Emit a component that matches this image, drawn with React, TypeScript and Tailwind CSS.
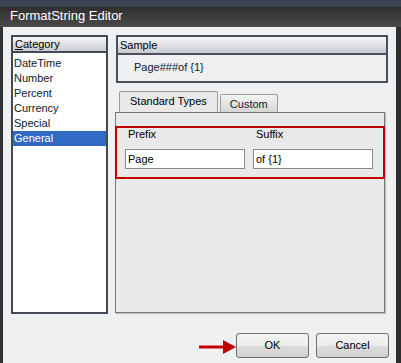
import React from "react";

const categories = ["DateTime", "Number", "Percent", "Currency", "Special", "General"];

const font = { fontFamily: '"Liberation Sans", Arial, sans-serif' };

const DialogButton = ({ label }: { label: string }) => (
    <button
        className="w-[73px] h-[25px] rounded-[3px] border border-[#707070] text-[11px] text-black bg-[linear-gradient(to_bottom,#f4f4f4_0%,#ebebeb_50%,#dddddd_51%,#cfcfcf_100%)]"
    >
        {label}
    </button>
);

const App: React.FC = () => {
    return (
        <div className="w-[401px] h-[363px] flex flex-col bg-[#333] overflow-hidden text-[11px] text-[#10182a]" style={font}>
            {/* title bar */}
            <div className="h-[27px] shrink-0 flex items-end pb-[5px] pl-[10px] bg-[linear-gradient(to_bottom,#3d4454_0px,#3d4454_7px,#2f2f2f_7px,#4a4a4a_100%)]">
                <span className="text-white text-[13px] leading-none">FormatString Editor</span>
            </div>

            <div className="flex flex-1">
                <div className="w-[3px] bg-[#333]"/>
                <div className="relative w-[393px] bg-[#eff0f2] flex flex-col pl-[8px] pt-[8px]">
                    <div className="flex gap-[8px]">
                        {/* category list */}
                        <div className="w-[97px] h-[279px] border-2 border-[#434955] bg-white flex flex-col">
                            <div className="h-[16px] border-b-2 border-[#434955] bg-[linear-gradient(to_bottom,#f6f7f8,#c8cbd0)] pl-[2px] leading-[15px] text-black">
                                <span className="underline">C</span>ategory
                            </div>
                            <div className="flex flex-col pt-[3px]">
                                {categories.map((c) => (
                                    <div
                                        key={c}
                                        className={
                                            c === "General"
                                                ? "h-[15px] leading-[15px] pl-[1px] bg-[#316ac5] text-white"
                                                : "h-[15px] leading-[15px] pl-[1px]"
                                        }
                                    >
                                        {c}
                                    </div>
                                ))}
                            </div>
                        </div>

                        {/* right column */}
                        <div className="w-[272px] flex flex-col">
                            <div className="h-[48px] border-2 border-[#4a505c] flex flex-col">
                                <div className="h-[18px] border-b-2 border-[#4a505c] bg-[linear-gradient(to_bottom,#f6f7f8,#c8cbd0)] pl-[2px] leading-[16px] text-black">
                                    Sample
                                </div>
                                <div className="pl-[16px] pt-[5px] leading-[14px]">Page###of {"{1}"}</div>
                            </div>

                            {/* tabs */}
                            <div className="flex items-end pl-[3px] pt-[8px] h-[29px]">
                                <div className="h-[21px] px-[10px] border border-b-0 border-[#9a9a9a] rounded-t-[2px] bg-[#e9e9e9] leading-[19px] text-black">
                                    Standard Types
                                </div>
                                <div className="h-[18px] ml-[2px] px-[9px] border border-b-0 border-[#9a9a9a] rounded-t-[2px] bg-[linear-gradient(to_bottom,#f4f4f4,#d6d6d6)] leading-[18px] text-[#222]">
                                    Custom
                                </div>
                            </div>
                            <div className="-ml-[1px] w-[270px] h-[201px] border border-[#787878] bg-[#e9e9e9] shadow-[1px_1px_1px_rgba(0,0,0,0.2)] pt-[13px]">
                                <div className="-ml-[1px] w-[270px] h-[53px] border-2 border-[#c00000] pl-[8px] flex gap-[8px]">
                                    <div className="flex flex-col">
                                        <div className="h-[13px] leading-[12px] pl-[3px] mb-[8px] text-black">Prefix</div>
                                        <div className="w-[120px] h-[20px] border border-[#8a8a8a] bg-white pl-[2px] leading-[18px] text-black">Page</div>
                                    </div>
                                    <div className="flex flex-col">
                                        <div className="h-[13px] leading-[12px] pl-[3px] mb-[8px] text-black">Suffix</div>
                                        <div className="w-[120px] h-[20px] border border-[#8a8a8a] bg-white pl-[2px] leading-[18px] text-black">of {"{1}"}</div>
                                    </div>
                                </div>
                            </div>
                        </div>
                    </div>

                    {/* buttons */}
                    <div className="flex justify-end gap-[7px] pr-[7px] mt-[19px]">
                        <DialogButton label="OK"/>
                        <DialogButton label="Cancel"/>
                    </div>

                    {/* annotation arrow */}
                    <svg className="absolute left-[196px] top-[312px]" width="38" height="16" viewBox="0 0 38 16">
                        <line x1="0" y1="8" x2="26" y2="8" stroke="#c00000" strokeWidth="3"/>
                        <polygon points="24,1 37,8 24,15" fill="#c00000"/>
                    </svg>
                </div>
                <div className="w-[5px] bg-[#2e2e2e]"/>
            </div>
        </div>
    );
};

export default App;
